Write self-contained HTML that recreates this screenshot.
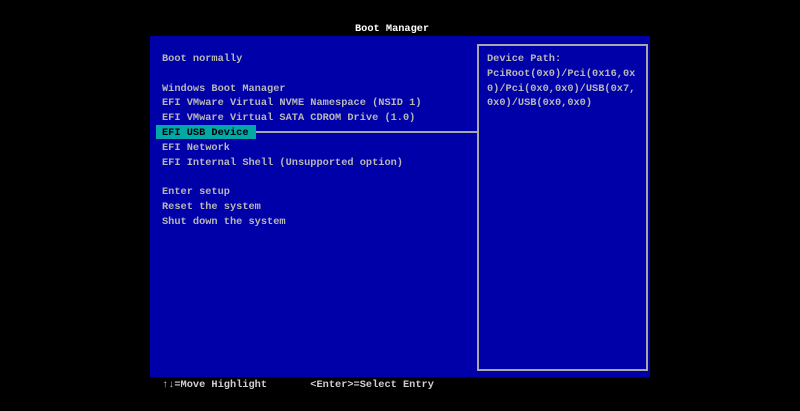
<!DOCTYPE html>
<html><head><style>
body{margin:0;background:#000;width:800px;height:411px;overflow:hidden;position:relative;font-family:"Liberation Mono",monospace;font-size:10.3px;font-weight:bold;}
.t{position:absolute;white-space:pre;line-height:14.8px;}
#panel{position:absolute;left:150px;top:36px;width:500px;height:341px;background:#0000a8;}
#box{position:absolute;left:477px;top:44px;width:167px;height:323px;border:2px solid #a8a8a8;box-sizing:content-box;}
.g{color:#b8b8b8}
</style></head><body>
<div class="t" style="left:355px;top:22px;color:#fff">Boot Manager</div>
<div id="panel"></div>
<div id="box"></div>
<div style="position:absolute;left:156px;top:125px;width:100px;height:14px;background:#00a8a8"></div>
<div style="position:absolute;left:256px;top:131px;width:221px;height:2px;background:#a8a8a8"></div>
<div class="t g" style="left:162px;top:52px">Boot normally

Windows Boot Manager
EFI VMware Virtual NVME Namespace (NSID 1)
EFI VMware Virtual SATA CDROM Drive (1.0)
<span style="color:#000">EFI USB Device</span>
EFI Network
EFI Internal Shell (Unsupported option)

Enter setup
Reset the system
Shut down the system</div>
<div class="t g" style="left:487px;top:52px">Device Path:
PciRoot(0x0)/Pci(0x16,0x
0)/Pci(0x0,0x0)/USB(0x7,
0x0)/USB(0x0,0x0)</div>
<div class="t" style="left:162px;top:378px;color:#d0d0d0">↑↓=Move Highlight       &lt;Enter&gt;=Select Entry</div>
</body></html>
